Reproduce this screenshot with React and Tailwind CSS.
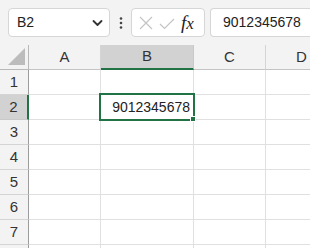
import React from "react";

const font = { fontFamily: '"Liberation Sans", Arial, sans-serif' };

function Toolbar() {
  return (
    <div className="flex h-[45px] items-start bg-[#f3f3f3] pt-[8px] pl-[8px]">
      <div className="flex h-[29px] w-[102px] items-center justify-between rounded-[4px] border border-[#d6d6d6] bg-white pl-[8px] pr-[6px]">
        <span className="text-[14px] text-[#222]">B2</span>
        <svg width="11" height="8" viewBox="0 0 11 8">
          <path d="M1.5 2 L5.5 6 L9.5 2" fill="none" stroke="#333" strokeWidth="1.8" strokeLinecap="round" strokeLinejoin="round" />
        </svg>
      </div>
      <div className="flex h-[29px] w-[21px] items-center justify-center">
        <svg width="4" height="12" viewBox="0 0 4 12">
          <circle cx="2" cy="1.5" r="1.3" fill="#444" />
          <circle cx="2" cy="6" r="1.3" fill="#444" />
          <circle cx="2" cy="10.5" r="1.3" fill="#444" />
        </svg>
      </div>
      <div className="flex h-[29px] w-[74px] items-center rounded-[4px] border border-[#d6d6d6] bg-white pl-[6px]">
        <svg width="14" height="14" viewBox="0 0 14 14" className="ml-[1px]">
          <path d="M1 1 L13 13 M13 1 L1 13" stroke="#c4c4c4" strokeWidth="1.2" />
        </svg>
        <svg width="16" height="12" viewBox="0 0 16 12" className="ml-[6px] mt-[2px]">
          <path d="M1 6 L5.5 10.5 L15 1" fill="none" stroke="#c4c4c4" strokeWidth="1.2" />
        </svg>
        <span className="ml-[6px] text-[19px] italic leading-none text-[#222]" style={{ fontFamily: '"Liberation Serif", "Times New Roman", serif' }}>
          <span>f</span>
          <span className="text-[17px]">x</span>
        </span>
      </div>
      <div className="ml-[5px] flex h-[29px] flex-1 items-center rounded-l-[4px] border border-r-0 border-[#d6d6d6] bg-white pl-[12px]">
        <span className="text-[14px] text-[#222]">9012345678</span>
      </div>
    </div>
  );
}

const cols = [
  { key: "A", w: "w-[72px]" },
  { key: "B", w: "w-[93px]" },
  { key: "C", w: "w-[72px]" },
  { key: "D", w: "w-[72px]" },
];

function HeaderRow() {
  return (
    <div className="flex h-[25px] bg-[#f3f3f3]">
      <div className="relative h-[25px] w-[29px] shrink-0 border-r border-b border-[#b8b8b8]">
        <svg width="18" height="18" viewBox="0 0 18 18" className="absolute left-[8px] top-[3px]">
          <path d="M17 0 L17 17 L0 17 Z" fill="#bcbcbc" />
        </svg>
      </div>
      {cols.map((c) =>
        c.key === "B" ? (
          <div
            key={c.key}
            className={`${c.w} shrink-0 flex items-center justify-center border-r border-[#c9c9c9] border-b-2 border-b-[#217346] bg-[#d2d2d2] text-[15px] text-[#333]`}
          >
            {c.key}
          </div>
        ) : (
          <div
            key={c.key}
            className={`${c.w} shrink-0 flex items-center justify-center border-r border-b border-[#d4d4d4] border-b-[#c4c4c4] text-[15px] text-[#333]`}
          >
            {c.key}
          </div>
        )
      )}
    </div>
  );
}

function Row({ n, label }) {
  const sel = n === 2;
  return (
    <div className="flex h-[25px]">
      {sel ? (
        <div className="flex w-[29px] shrink-0 items-center justify-center border-r-2 border-[#217346] border-b border-b-[#c9c9c9] bg-[#d2d2d2] text-[15px] text-[#333]">
          {label}
        </div>
      ) : (
        <div className="flex w-[29px] shrink-0 items-center justify-center border-r border-[#9c9c9c] border-b border-b-[#d4d4d4] bg-[#f3f3f3] text-[15px] text-[#333]">
          {label}
        </div>
      )}
      {cols.map((c) => (
        <div key={c.key} className={`${c.w} shrink-0 border-r border-b border-[#e0e0e0] bg-white`} />
      ))}
    </div>
  );
}

export default function App() {
  return (
    <div className="relative h-[248px] w-[310px] overflow-hidden bg-white" style={font}>
      <Toolbar />
      <HeaderRow />
      {[1, 2, 3, 4, 5, 6, 7, 8].map((n) => (
        <Row key={n} n={n} label={n < 8 ? n : ""} />
      ))}
      <div className="absolute left-[99px] top-[93px] flex h-[28px] w-[96px] items-center justify-end border-2 border-[#217346] pr-[3px]">
        <span className="text-[14px] text-[#222]">9012345678</span>
      </div>
      <div className="absolute left-[190px] top-[116px] h-[6px] w-[6px] border border-white bg-[#217346]" />
    </div>
  );
}
